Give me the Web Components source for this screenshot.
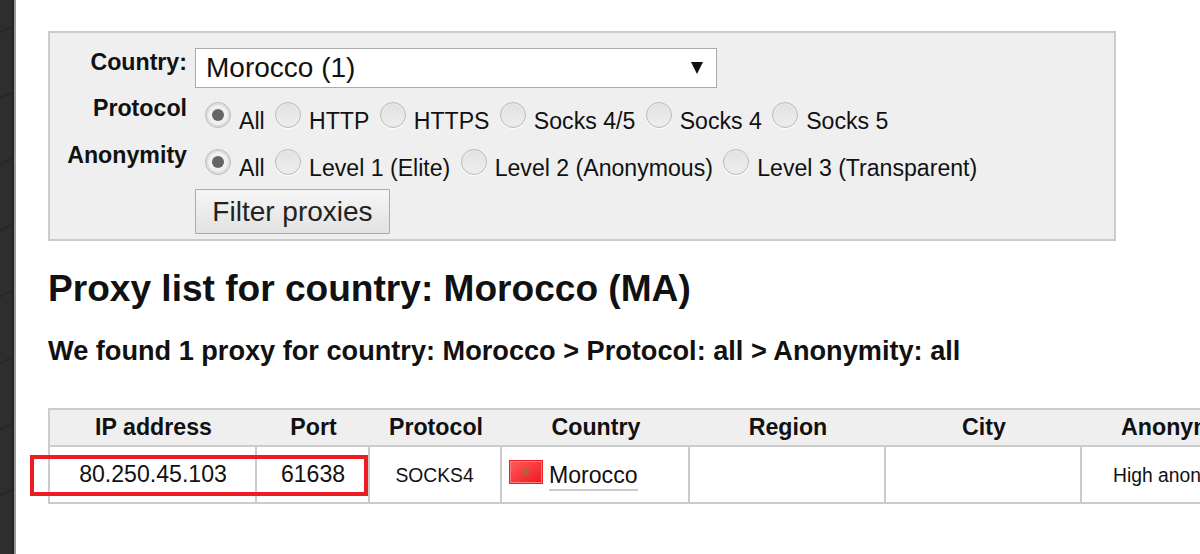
<!DOCTYPE html>
<html lang="en"><head><meta charset="utf-8">
<style>
html,body{margin:0;padding:0;height:554px;overflow:hidden;background:#fff;font-family:"Liberation Sans",Arial,sans-serif;color:#000}
</style></head><body>
<proxy-page></proxy-page>
<template id="radio-t"><style>
:host{display:inline-flex;align-items:flex-start;margin-right:10.4px;font-size:23.1px;line-height:28px;color:#111}
.c{box-sizing:border-box;width:26px;height:26px;border-radius:50%;border:1px solid #bbb;background:linear-gradient(#e2e2e2,#eee);box-shadow:inset 0 0 0 1px #eaeaea,0 1px 1px #fff;margin-right:8px;flex:none;display:flex;align-items:center;justify-content:center}
.d{width:12px;height:12px;border-radius:50%;background:#666;display:none}
:host([checked]) .d{display:block}
:host([checked]) .c{background:#f1f1f1;box-shadow:inset 0 0 0 2px #ddd}
.l{margin-top:5px;white-space:nowrap}
</style><span class="c"><span class="d"></span></span><span class="l"><slot></slot></span></template>
<script>
const tpl=(css,html)=>`<style>${css}</style>${html}`;
class RadioOpt extends HTMLElement{constructor(){super();this.attachShadow({mode:'open'}).append(document.getElementById('radio-t').content.cloneNode(true));}}
customElements.define('radio-opt',RadioOpt);

class FilterPanel extends HTMLElement{constructor(){super();this.attachShadow({mode:'open'}).innerHTML=tpl(`
:host{display:block;box-sizing:border-box;width:1068px;height:210px;margin-top:31px;border:2px solid #ccc;background:#efefef;padding:15px 0 0 0}
.row{display:grid;grid-template-columns:137px 1fr;column-gap:8px}
.lab{font-weight:bold;font-size:23.2px;line-height:28px;text-align:right;color:#111;white-space:nowrap}
.up{margin-top:-8px}
.sel{box-sizing:border-box;width:522px;height:40px;background:#fff;border:1px solid #aaa;display:flex;align-items:center;justify-content:space-between;padding:0 13px 0 10px;font-size:28px;color:#111}
.arr{width:0;height:0;border-left:6.5px solid transparent;border-right:6.5px solid transparent;border-top:12px solid #111}
.radios{display:flex;padding-left:10px}
.r1{height:47px}
.r2{height:40px}
.btn{box-sizing:border-box;width:195px;height:45px;border:1px solid #aaa;border-radius:1px;background:linear-gradient(#f6f6f6,#e2e2e2);font-size:28px;display:flex;align-items:center;justify-content:center;color:#222}
`,`
<div class="row" style="height:54px"><div class="lab">Country:</div><div class="sel"><span>Morocco (1)</span><span class="arr"></span></div></div>
<div class="row r1"><div class="lab up">Protocol</div><div class="radios"><radio-opt checked>All</radio-opt><radio-opt>HTTP</radio-opt><radio-opt>HTTPS</radio-opt><radio-opt>Socks 4/5</radio-opt><radio-opt>Socks 4</radio-opt><radio-opt>Socks 5</radio-opt></div></div>
<div class="row r2"><div class="lab up">Anonymity</div><div class="radios"><radio-opt checked>All</radio-opt><radio-opt>Level 1 (Elite)</radio-opt><radio-opt>Level 2 (Anonymous)</radio-opt><radio-opt>Level 3 (Transparent)</radio-opt></div></div>
<div class="row"><div></div><div class="btn">Filter proxies</div></div>`);}}
customElements.define('filter-panel',FilterPanel);

class ProxyTable extends HTMLElement{constructor(){super();
const cols=[207,113,132,188,196,196,198];
const heads=['IP address','Port','Protocol','Country','Region','City','Anonymity'];
const cells=['<span class="big">80.250.45.103</span>','<span class="big">61638</span>','<span class="sm">SOCKS4</span>','<span class="ctry"><svg width="34" height="24" viewBox="0 0 34 24"><defs><linearGradient id="fg" x1="0" y1="0" x2="1" y2="1"><stop offset="0" stop-color="#ff5a5e"/><stop offset="1" stop-color="#ee1a20"/></linearGradient></defs><rect x=".5" y=".5" width="33" height="23" fill="none" stroke="#ee1c25"/><rect x="1.5" y="1.5" width="31" height="21" fill="url(#fg)" stroke="#ff7c7c"/><circle cx="17" cy="12" r="3" fill="#a9683a"/></svg><span class="lnk">Morocco</span></span>','','','<span class="sm">High anonymity</span>'];
const g=`grid-template-columns:${cols.map(c=>c+'px').join(' ')}`;
this.attachShadow({mode:'open'}).innerHTML=tpl(`
:host{display:block;width:1152px;overflow:hidden}
.t{width:1232px;border:solid #ccc;border-width:2px 0 2px 2px;box-sizing:border-box}
.r{display:grid}
.h{background:#efefef;height:35px;border-bottom:2px solid #ccc}
.h>div{font-weight:bold;font-size:23.2px;line-height:35px;text-align:center;color:#111;white-space:nowrap}
.b{height:55px}
.b>div{border-right:2px solid #ccc;box-sizing:border-box;display:flex;align-items:center;justify-content:center;white-space:nowrap;overflow:hidden;color:#111}
.big{font-size:23.1px;position:relative;left:.5px}
.sm{font-size:19.3px;position:relative;top:1px;left:-.5px}
.ctry{display:flex;align-items:flex-start;font-size:23.1px;width:100%;padding-left:7px}
.ctry svg{margin-right:6px;margin-top:1px;flex:none}
.lnk{border-bottom:2px solid #ccc;line-height:27px;margin-top:3px}
`,`<div class="t"><div class="r h" style="${g}">${heads.map(h=>`<div>${h}</div>`).join('')}</div>
<div class="r b" style="${g}">${cells.map(c=>`<div>${c}</div>`).join('')}</div></div>`);}}
customElements.define('proxy-table',ProxyTable);

class ProxyPage extends HTMLElement{constructor(){super();this.attachShadow({mode:'open'}).innerHTML=tpl(`
:host{display:flex;height:554px;position:relative;overflow:hidden}
.side{width:14px;flex:none;border-right:2px solid #999;box-shadow:inset -2px 0 0 #222;background:repeating-linear-gradient(-25deg,#2e2e2e 0 58px,#272727 58px 60px)}
main{padding-left:32px;flex:1;min-width:0}
h1{font-size:37.1px;line-height:44px;margin:25px 0 0;color:#111;white-space:nowrap}
h2{font-size:27.15px;line-height:34px;margin:24px 0 0;color:#111;white-space:nowrap}
.gap{height:40px}
.mark{position:absolute;left:30px;top:455px;width:338px;height:41px;box-sizing:border-box;border:4.5px solid #ed1c24;pointer-events:none}
`,`<div class="side"></div><main><filter-panel></filter-panel>
<h1>Proxy list for country: Morocco (MA)</h1>
<h2>We found 1 proxy for country: Morocco &gt; Protocol: all &gt; Anonymity: all</h2>
<div class="gap"></div><proxy-table></proxy-table></main><div class="mark"></div>`);}}
customElements.define('proxy-page',ProxyPage);
</script>
</body></html>
